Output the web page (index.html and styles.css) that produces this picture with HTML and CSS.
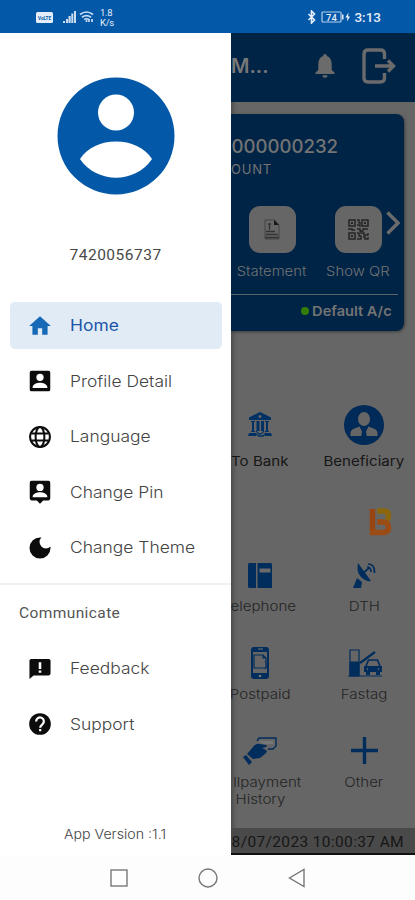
FILE: index.html
```html
<!DOCTYPE html>
<html lang="en">
<head>
<meta charset="utf-8">
<title>Mobile Banking</title>
<link rel="stylesheet" href="styles.css">
</head>
<body>
<header class="status">
  <svg class="status-left" viewBox="0 0 42 22" width="42" height="22">
    <rect x="1" y="6" width="17" height="11" rx="1.5" fill="#e4eefa"/>
    <text x="9.5" y="13.8" font-size="6" font-weight="700" text-anchor="middle" textLength="13" lengthAdjust="spacingAndGlyphs" fill="#0458a8">VoLTE</text>
    <g fill="#c9dcf2"><rect x="28" y="15" width="2" height="2"/><rect x="31" y="13" width="2" height="4"/><rect x="33.500" y="10" width="2.200" height="7"/><rect x="36.300" y="7.500" width="2" height="9.500"/><rect x="39" y="5" width="2" height="12"/></g>
  </svg>
  <svg class="wifi" viewBox="0 0 16 14" width="16" height="14" fill="none" stroke="#c9dcf2" stroke-width="1.700"><path d="M1 4.500Q7.500-.5 14 4.500M3 7.200Q7.500 4 12 7.200M5.200 9.500Q7.500 8 9.800 9.500"/><path d="M7.500 10v2M10 9v3M13 9v3" /></svg>
  <div class="speed"><span>1.8</span><span>K/s</span></div>
  <div class="status-right">
    <svg viewBox="0 0 10 14" width="10" height="14" fill="none" stroke="#e4eefa" stroke-width="1.600"><path d="M1.500 4l6 6L4.500 13V1l3 3-6 6"/></svg>
    <svg viewBox="0 0 32 14" width="32" height="14"><rect x="1" y="2" width="19" height="10" rx="1" fill="none" stroke="#b4cdea" stroke-width="1.200"/><path d="M21 4.500h1.500v5H21z" fill="#e4eefa"/><text x="10.500" y="10.500" font-size="9.500" font-weight="500" text-anchor="middle" fill="#e4eefa">74</text><path d="M27.500 2.500l-3 5h2l-.5 4 3-5h-2z" fill="#fff"/></svg>
    <span class="clock">3:13</span>
  </div>
</header>
<main class="stage">
  <nav class="drawer">
    <svg class="avatar" viewBox="0 0 118 118" width="118" height="118"><circle cx="59" cy="59" r="58.500" fill="#0458a8"/><circle cx="59" cy="35.500" r="18" fill="#fff"/><path d="M23 82C37 58.500 81 58.500 95 82C78 107 40 107 23 82Z" fill="#fff"/></svg>
    <div class="phone">7420056737</div>
    <ul class="menu">
      <li class="item active"><svg viewBox="0 0 24 24"><path d="M10 20v-6h4v6h5v-8h3L12 3 2 12h3v8z"/></svg><span>Home</span></li>
      <li class="item"><svg viewBox="0 0 24 24"><path fill-rule="evenodd" d="M.8 2.800v18.400a2 2 0 0 0 2 2h18.400a2 2 0 0 0 2-2V2.800a2 2 0 0 0-2-2H2.800a2 2 0 0 0-2 2zM16 8a4 4 0 1 1-8 0 4 4 0 0 1 8 0zM4 18.500c0-3 5-4.600 8-4.600s8 1.600 8 4.600v1H4z"/></svg><span>Profile Detail</span></li>
      <li class="item"><svg viewBox="0 0 24 24" class="line"><circle cx="12" cy="12" r="10.800"/><ellipse cx="12" cy="12" rx="4.800" ry="10.800"/><path d="M2.500 8.300h19M2.500 15.700h19"/></svg><span>Language</span></li>
      <li class="item"><svg viewBox="0 0 24 26" class="pin"><path fill-rule="evenodd" d="M21.200.8H2.800a2 2 0 0 0-2 2v17.400a2 2 0 0 0 2 2H8.500L12 25.700l3.500-3.500h5.700a2 2 0 0 0 2-2V2.800a2 2 0 0 0-2-2zM16 8a4 4 0 1 1-8 0 4 4 0 0 1 8 0zM4 18c0-3 5-4.600 8-4.600s8 1.600 8 4.600v.6H4z"/></svg><span>Change Pin</span></li>
      <li class="item"><svg viewBox="1 1 22 22"><path d="M12 1.500a10.500 10.500 0 1 0 10.500 10.500c0-.5 0-.9-.1-1.400A6 6 0 1 1 13.400 1.600z"/></svg><span>Change Theme</span></li>
    </ul>
    <hr class="rule">
    <h2 class="section">Communicate</h2>
    <ul class="menu">
      <li class="item"><svg viewBox="0 0 24 24"><path fill-rule="evenodd" d="M21.500 1h-19A2 2 0 0 0 .5 3v20l4.500-4h16.500a2 2 0 0 0 2-2V3a2 2 0 0 0-2-2zM13.400 16h-2.800v-2.400h2.800zm0-4h-2.800V4.500h2.800z"/></svg><span>Feedback</span></li>
      <li class="item"><svg viewBox="0 0 24 24"><circle cx="12" cy="12" r="11.800"/><path d="M7.800 9.200a4.200 4.200 0 1 1 7 3C13 13.600 12.200 14 12.200 16" fill="none" stroke="#fff" stroke-width="2.400"/><path d="M11 17.500h2.400v2.400H11z" fill="#fff"/></svg><span>Support</span></li>
    </ul>
    <div class="version">App Version :1.1</div>
  </nav>
  <section class="page">
    <header class="appbar">
      <span class="title">M...</span>
      <svg class="bell" viewBox="0 0 20 24" width="20" height="24"><path d="M10 0a1.800 1.800 0 0 0-1.800 2C5 3 3.300 6 3.300 10v6L.5 18.600V20h19v-1.400L16.700 16v-6c0-4-1.700-7-4.900-8A1.800 1.800 0 0 0 10 0zM7.500 21.200a2.500 2.500 0 0 0 5 0z" fill="#6b6b6b"/></svg>
      <svg class="exit" viewBox="0 0 34 36" width="34" height="36" fill="none" stroke="#6b6b6b" stroke-width="3.400"><path d="M22.500 11V6q0-4-4-4H6Q2 2 2 6v24q0 4 4 4h12.500q4 0 4-4v-5M13 18h18M26 12.500l5.500 5.500-5.500 5.500"/></svg>
    </header>
    <article class="card">
      <div class="number">000000232</div>
      <div class="kind">OUNT</div>
      <div class="actions">
        <div class="action"><div class="tile"><svg viewBox="0 0 18 22" width="18" height="22"><path d="M2 1h10l4 5v14H2z" fill="#666" stroke="#444"/><path d="M11 1v5h5z" fill="#171717"/><path d="M5 5h3M6.500 5v6M3 12.500h9M3 15.500h12M2 18.500h14" stroke="#333" stroke-width="1.300"/></svg></div><span class="wide">Statement</span></div>
        <div class="action"><div class="tile"><svg viewBox="0 0 21 21" width="21" height="21" fill="none" stroke="#252525"><path d="M1 1h6v6H1zM14 1h6v6h-6zM1 14h6v6H1z" stroke-width="1.500"/><path d="M3 4h2M16 4h2M3 17h2" stroke-width="2"/><path d="M9 1h2v3h2M9 6h3v2M0 10h4v1h3M9 10h3v2h3v-2h5M9 14h2v3h2v3H9M14 14h2v2h4v-2M15 18h2v2h3v-2M13 12v3" stroke-width="1.400"/></svg></div><span class="wide">Show QR</span></div>
      </div>
      <svg class="chevron" viewBox="0 0 14 24" width="14" height="24" fill="none" stroke="#6b6b6b" stroke-width="3.400"><path d="M1.500 1.500L12 12 1.500 22.500"/></svg>
      <div class="default"><i class="dot"></i><span>Default A/c</span></div>
    </article>
    <div class="grid transfer">
      <div class="cell"><div class="ico"><svg viewBox="0 0 24 25" width="24" height="25" fill="#003164"><path d="M12 0l11 5.500V8H1V5.500z"/><circle cx="12" cy="4.500" r="1.500" fill="#666"/><path d="M3 9h4v1H6v9h1v1H3v-1h1v-9H3zM8.500 9h3v10h-3zM13 9h3v10h-3zM17 9h4v1h-1v9h1v1h-4v-1h1v-9h-1zM1 21h7v3H0zM17 21h6l1 3h-7z"/><path d="M8 19q4 6 8 0M8 22l3 2h4l3-3" fill="none" stroke="#003164" stroke-width="1.300"/></svg></div><span class="wide">To Bank</span></div>
      <div class="cell"><div class="ico"><svg viewBox="0 0 40 40" width="40" height="40"><circle cx="20" cy="20" r="20" fill="#002b58"/><ellipse cx="20" cy="14" rx="6" ry="7" fill="#666"/><path d="M6.500 31v-3q0-3 4-4.500l5-2 4.500 9 4.500-9 5 2q4 1.500 4 4.500v3z" fill="#666"/><path d="M18.500 23h3l1.200 8h-5.400z" fill="#002b58"/></svg></div><span class="wide">Beneficiary</span></div>
    </div>
    <svg class="bharat" viewBox="0 0 23 28" width="23" height="28" fill="none" stroke-width="5.500"><path d="M8 3h7q4.500 0 4.500 4.500 0 3-1.500 5" stroke="#8b680e"/><path d="M3.500 1v26" stroke="#984413"/><path d="M1 24.500h13q5.500 0 5.500-5T14 14H8" stroke="#9b4b14"/></svg>
    <div class="grid bills">
      <div class="cell"><div class="ico"><svg viewBox="0 0 24 25" width="24" height="25"><path d="M1 0h7v25H1q-1 0-1-2V2q0-2 1-2zM9.500 0H23l1 1v24H9.500z" fill="#002d5c"/><path d="M11.500 5.500h11v4h-11z" fill="#6b6b6b"/></svg></div><span class="wide shift">elephone</span></div>
      <div class="cell"><div class="ico"><svg viewBox="0 0 24 25" width="24" height="25"><path d="M6 0Q4 9 9 14T19 18zM5 15l5 4-1 6H1z" fill="#002d5c"/><path d="M10 11l7-6M15 4q4 0 4 5M16 1q7 0 6.500 9" fill="none" stroke="#002d5c" stroke-width="1.700"/></svg></div><span class="wide">DTH</span></div>
      <div class="cell"><div class="ico"><svg viewBox="0 0 20 32" width="20" height="32"><rect x="1" width="18" height="32" rx="3" fill="#002d5c"/><path d="M3 5h14v21H3z" fill="#666"/><path d="M4 8h9l3 3v10H4zM13 8v3h3M15 14l3 4-3 4" fill="none" stroke="#002d5c" stroke-width="1.200"/><circle cx="10" cy="29" r="1.300" fill="#777"/><path d="M8 2h5" stroke="#777"/></svg></div><span class="wide">Postpaid</span></div>
      <div class="cell"><div class="ico"><svg class="fast" viewBox="0 0 34 28" width="34" height="28" fill="none" stroke="#002d5c"><path d="M2 1h9v26H2zM0 27h34" stroke-width="1.200"/><path d="M2 13h9v14H2z" fill="#002d5c"/><path d="M12 14L27 3" stroke-width="2.200"/><path d="M18 17l2.500-6h9l2.500 6" stroke-width="1.700"/><path d="M16 17h18v6h-2v3h-4v-3h-6v3h-4v-3h-2z" fill="#002d5c" stroke="none"/><circle cx="19.500" cy="20" r="1.300" fill="#666"/><circle cx="30.500" cy="20" r="1.300" fill="#666"/></svg></div><span class="wide">Fastag</span></div>
      <div class="cell"><div class="ico"><svg viewBox="0 0 34 28" width="34" height="28"><path d="M14 4l2-3h17v8l-3 3h-5" fill="none" stroke="#002d5c" stroke-width="1.400"/><path d="M15 4h15v3H20z" fill="#777"/><path d="M4 17l6-7q3-4 7-3l6 1q2 1 0 2l-4 1 4 2q2 2-1 4l-5 4-7 1zM0 20l3-2 6 7-3 3z" fill="#002d5c"/></svg></div><div class="two"><span class="wide far">llpayment</span><span class="wide">History</span></div></div>
      <div class="cell"><div class="ico"><svg viewBox="0 0 27 27" width="27" height="27"><path d="M13.500 0v27M0 13.500h27" stroke="#002d5c" stroke-width="3.400"/></svg></div><span class="wide">Other</span></div>
    </div>
    <footer class="stamp">8/07/2023 10:00:37 AM</footer>
  </section>
</main>
<footer class="navbar">
  <svg viewBox="0 0 18 18" width="18" height="18"><rect x="1" y="1" width="16" height="16"/></svg>
  <svg viewBox="0 0 20 20" width="20" height="20"><circle cx="10" cy="10" r="9"/></svg>
  <svg viewBox="0 0 18 20" width="18" height="20"><path d="M16 1.500v17L1.500 10z"/></svg>
</footer>
</body>
</html>
```
FILE: styles.css
```css
* { box-sizing: border-box; }
body { margin: 0; width: 415px; height: 900px; display: flex; flex-direction: column; overflow: hidden; background: #fff; font-family: Inter, "Liberation Sans", sans-serif; }
svg { display: block; flex: none; }
ul { list-style: none; margin: 0; padding: 0; }

.status { height: 33px; flex: none; background: #0458a8; display: flex; align-items: center; padding: 0 34px 0 35px; font-family: Roboto, sans-serif; color: #e4eefa; }
.status-left { margin-right: 2px; }
.speed { display: flex; flex-direction: column; font-size: 9.5px; line-height: 10px; margin: 2px 0 0 5px; letter-spacing: -.3px; }
.status-right { margin-left: auto; display: flex; align-items: center; gap: 4px; }
.clock { font-size: 13.5px; font-weight: 500; margin-left: -3px; }

.stage { height: 822px; flex: none; display: flex; }
.drawer { width: 231px; flex: none; background: #fff; display: flex; flex-direction: column; }
.avatar { margin: 44px 0 0 56.5px; }
.phone { font: 400 15.5px/20px Roboto, sans-serif; color: #484848; letter-spacing: .5px; margin: 50px 0 37px 69.5px; }
.menu { display: flex; flex-direction: column; gap: 8.5px; padding: 0 9px 0 9.5px; }
.item { height: 47px; display: flex; align-items: center; gap: 19px; padding-left: 19px; border-radius: 5px; font-size: 15.5px; font-weight: 300; color: #444; white-space: nowrap; }
.item span { display: inline-block; transform: scaleX(1.125); transform-origin: left; }
.item svg { width: 22px; height: 22px; fill: #0c0c0c; }
.item .line { fill: none; stroke: #0c0c0c; stroke-width: 2.2; }
.item .pin { height: 24px; }
.active { background: #e0ebf5; color: #1a55a6; font-weight: 400; }
.active svg { fill: #1769b8; width: 26px; height: 26px; margin: 0 -2px; }
.rule { width: 100%; height: 2px; border: 0; margin: 12px 0 19px; background: #f0f0f0; }
.section { margin: 0 0 23px 19px; font: 400 15.5px/18px Roboto, sans-serif; letter-spacing: .4px; color: #555; }
.version { margin: 76px 0 0 64px; font-size: 13px; line-height: 20px; font-weight: 300; color: #444; white-space: nowrap; transform: scaleX(1.09); transform-origin: left; }

.page { width: 184px; overflow: hidden; background: #666; display: flex; flex-direction: column; box-shadow: inset 4px 0 5px -2px rgba(0,0,0,.3); }
.appbar { height: 69px; flex: none; background: #002446; display: flex; align-items: center; padding-bottom: 4px; }
.title { font-size: 20px; font-weight: 600; color: #777; width: 84px; flex: none; }
.exit { margin-left: 27px; }
.card { position: relative; width: 173px; height: 217px; flex: none; margin-top: 12px; background: #002446; border-radius: 0 8px 8px 0; box-shadow: 1px 1px 3px rgba(0,0,0,.4); color: #747474; display: flex; flex-direction: column; }
.number { margin: 20px 66px 0 0; align-self: flex-end; font-size: 18.6px; line-height: 24px; font-weight: 500; }
.kind { margin: 3px 0 0; font-size: 13px; line-height: 17px; letter-spacing: .8px; }
.actions { display: flex; margin: 28px 0 0 -2px; }
.action { width: 86px; flex: none; display: flex; flex-direction: column; align-items: center; font-size: 13px; font-weight: 300; line-height: 18px; gap: 9px; white-space: nowrap; }
.tile { width: 47px; height: 47px; border-radius: 11px; background: #666; display: flex; align-items: center; justify-content: center; }
.chevron { position: absolute; right: 4px; top: 97px; }
.default { margin: 14px 6px 0 0; border-top: 1.5px solid #5b6269; display: flex; align-items: center; justify-content: flex-end; gap: 9px; padding: 7px 6px 0 0; font-size: 13.5px; line-height: 18px; font-weight: 600; }
.default span { transform: scaleX(1.08); transform-origin: right; }
.dot { width: 8px; height: 8px; border-radius: 50%; background: #347d08; }

.grid { display: grid; grid-template-columns: 104px 104px; margin-left: -23px; width: 208px; flex: none; }
.cell { display: flex; flex-direction: column; align-items: center; text-align: center; font-size: 13px; line-height: 17px; font-weight: 300; color: #242424; white-space: nowrap; }
.wide { display: inline-block; transform: scaleX(1.16); }
.action .wide { transform: scaleX(1.14); }
.shift { margin-left: 7px; }
.far { margin-left: 14px; }
.two { display: flex; flex-direction: column; align-items: center; }
.ico { display: flex; align-items: center; justify-content: center; }
.transfer { margin-top: 73px; }
.transfer .ico { height: 41px; }
.transfer .cell { gap: 8px; font-weight: 400; color: #161616; }
.bharat { margin: 38px 0 0 138px; }
.bills { margin-top: 22px; grid-template-rows: 87.5px 88px 80px; }
.bills .ico { height: 34px; }
.bills .cell { gap: 6px; }
.fast { margin-left: 1px; }
.stamp { margin-top: auto; height: 27px; flex: none; background: #4a4a4a; border-bottom: 2px solid #111; color: #161616; font: 400 15.5px/29px Roboto, sans-serif; letter-spacing: .36px; text-align: right; padding-right: 11px; white-space: nowrap; }

.navbar { flex: 1; background: #fdfdfd; display: flex; align-items: center; padding-left: 110px; gap: 70px; }
.navbar svg { fill: none; stroke: #777; stroke-width: 1.4; }
```
